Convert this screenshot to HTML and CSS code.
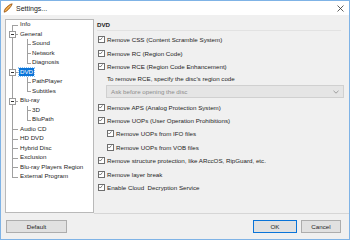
FILE: index.html
```html
<html>
<head>
	<title>Settings...</title>
	<meta http-equiv="Content-Type" content="text/html; charset=utf-8" />
	<link rel="stylesheet" href="styles.css">
</head>
<body>
	<div class="window">
		<div class="titlebar">
			<svg class="app_icon" viewBox="0 0 10 10" width="10" height="10">
				<path d="M1.2 9.2 C1 6.5 3 4.5 5.5 2.6 C6.8 1.6 8 1 9.2 0.8 C8.8 2.3 7.9 3.6 6.8 4.9 C5 7 3.4 8.6 1.2 9.2 Z" fill="#e8962e" stroke="#8a4b12" stroke-width="0.7"/>
				<path d="M2.4 7.8 C3.5 6.4 5.2 4.6 7.6 2.4" fill="none" stroke="#fbd48a" stroke-width="0.7"/>
			</svg>
			<span class="title">Settings...</span>
			<svg class="close" viewBox="0 0 7 7" width="7" height="7">
				<path d="M0.5 0.5 L6.5 6.5 M6.5 0.5 L0.5 6.5" stroke="#333" stroke-width="0.8"/>
			</svg>
		</div>

		<div class="main">
			<div class="tree">
				<ul class="tree_root">
					<li class="first"><div class="row"><span class="label">Info</span></div></li>
					<li><div class="row"><i class="toggle"></i><span class="label">General</span></div>
						<ul class="sub">
							<li><div class="row"><span class="label">Sound</span></div></li>
							<li><div class="row"><span class="label">Network</span></div></li>
							<li><div class="row"><span class="label">Diagnosis</span></div></li>
						</ul>
					</li>
					<li><div class="row"><i class="toggle"></i><span class="label selected">DVD</span></div>
						<ul class="sub">
							<li><div class="row"><span class="label">PathPlayer</span></div></li>
							<li><div class="row"><span class="label">Subtitles</span></div></li>
						</ul>
					</li>
					<li><div class="row"><i class="toggle"></i><span class="label">Blu-ray</span></div>
						<ul class="sub">
							<li><div class="row"><span class="label">3D</span></div></li>
							<li><div class="row"><span class="label">BluPath</span></div></li>
						</ul>
					</li>
					<li><div class="row"><span class="label">Audio CD</span></div></li>
					<li><div class="row"><span class="label">HD DVD</span></div></li>
					<li><div class="row"><span class="label">Hybrid Disc</span></div></li>
					<li><div class="row"><span class="label">Exclusion</span></div></li>
					<li><div class="row"><span class="label">Blu-ray Players Region</span></div></li>
					<li><div class="row"><span class="label">External Program</span></div></li>
				</ul>
			</div>

			<div class="page">
				<div class="page_head">DVD</div>
				<label class="check"><i class="box"><svg viewBox="0 0 7 7"><path d="M1.2 3.6 L2.8 5.2 L5.9 1.6"/></svg></i>Remove CSS (Content Scramble System)</label>
				<label class="check"><i class="box"><svg viewBox="0 0 7 7"><path d="M1.2 3.6 L2.8 5.2 L5.9 1.6"/></svg></i>Remove RC (Region Code)</label>
				<label class="check"><i class="box"><svg viewBox="0 0 7 7"><path d="M1.2 3.6 L2.8 5.2 L5.9 1.6"/></svg></i>Remove RCE (Region Code Enhancement)</label>
				<div class="hint">To remove RCE, specify the disc's region code</div>
				<div class="combo">
					<span>Ask before opening the disc</span>
					<svg class="chevron" viewBox="0 0 6 4" width="6" height="4"><path d="M0.5 0.8 L3 3.2 L5.5 0.8" fill="none" stroke="#8a8a8a" stroke-width="0.8"/></svg>
				</div>
				<label class="check"><i class="box"><svg viewBox="0 0 7 7"><path d="M1.2 3.6 L2.8 5.2 L5.9 1.6"/></svg></i>Remove APS (Analog Protection System)</label>
				<label class="check"><i class="box"><svg viewBox="0 0 7 7"><path d="M1.2 3.6 L2.8 5.2 L5.9 1.6"/></svg></i>Remove UOPs (User Operation Prohibitions)</label>
				<label class="check indented"><i class="box"><svg viewBox="0 0 7 7"><path d="M1.2 3.6 L2.8 5.2 L5.9 1.6"/></svg></i>Remove UOPs from IFO files</label>
				<label class="check indented"><i class="box"><svg viewBox="0 0 7 7"><path d="M1.2 3.6 L2.8 5.2 L5.9 1.6"/></svg></i>Remove UOPs from VOB files</label>
				<label class="check"><i class="box"><svg viewBox="0 0 7 7"><path d="M1.2 3.6 L2.8 5.2 L5.9 1.6"/></svg></i>Remove structure protection, like ARccOS, RipGuard, etc.</label>
				<label class="check"><i class="box"><svg viewBox="0 0 7 7"><path d="M1.2 3.6 L2.8 5.2 L5.9 1.6"/></svg></i>Remove layer break</label>
				<label class="check"><i class="box"><svg viewBox="0 0 7 7"><path d="M1.2 3.6 L2.8 5.2 L5.9 1.6"/></svg></i>Enable Cloud&nbsp; Decryption Service</label>
			</div>
		</div>

		<div class="footer">
			<button class="btn btn_default">Default</button>
			<span class="spacer"></span>
			<button class="btn btn_ok">OK</button>
			<button class="btn btn_cancel">Cancel</button>
		</div>
	</div>
</body>
</html>
```

FILE: styles.css
```css
body { margin: 0; font-family: "Liberation Sans", Arial, sans-serif; font-size: 6.2px; color: #1e1e1e; }
.window { width: 350px; height: 240px; box-sizing: border-box; border: 1px solid #7fb3e6; background-color: #f0f0f0; display: flex; flex-direction: column; }

/* title bar */
.titlebar { height: 14px; background-color: #fff; display: flex; align-items: center; padding-left: 2px; }
.app_icon { width: 10px; height: 10px; }
.title { font-size: 7px; margin-left: 3px; color: #222; flex: 1; }
.close { margin-right: 5px; }

/* body */
.main { display: flex; padding: 4px 0 0 4px; }
.tree { width: 87px; height: 192px; background-color: #fff; border: 1px solid #b9b9b9; }
.tree ul { list-style: none; margin: 0; padding: 0; }
.tree_root { padding-top: 1.5px; }
.tree li { position: relative; }
.row { position: relative; height: 9.5px; line-height: 9.5px; white-space: nowrap; }
.tree_root > li > .row { padding-left: 14px; }
.sub > li > .row { padding-left: 26px; }

/* tree lines */
.tree_root > li::before { content: ''; position: absolute; left: 6px; top: 0; bottom: 0; border-left: 1px solid #a0a0a0; }
.tree_root > li.first::before { top: 4.75px; }
.tree_root > li:last-child::before { bottom: auto; height: 4.75px; }
.tree_root > li > .row::before { content: ''; position: absolute; left: 6px; width: 6px; top: 4.5px; border-top: 1px solid #a0a0a0; }
.sub > li::before { content: ''; position: absolute; left: 21px; top: 0; bottom: 0; border-left: 1px solid #a0a0a0; }
.sub > li:last-child::before { bottom: auto; height: 4.75px; }
.sub > li > .row::before { content: ''; position: absolute; left: 21px; width: 4px; top: 4.5px; border-top: 1px solid #a0a0a0; }
.toggle { position: absolute; left: 3px; top: 1.5px; width: 5px; height: 5px; border: 1px solid #9a9a9a; background-color: #fff; z-index: 1; }
.toggle::after { content: ''; position: absolute; left: 1px; top: 2px; width: 3px; border-top: 1px solid #333; }
.label { display: inline-block; padding: 0 1px; margin-left: -1px; line-height: 8px; }
.selected { background-color: #0a74d8; color: #fff; outline: 1px dotted #8cc4f5; }

/* settings page */
.page { flex: 1; height: 194px; padding-left: 4px; border-bottom: 1px solid #d6d6d6; }
.page_head { font-weight: bold; margin: 0 8px 2.3px -1px; padding-top: 1px; line-height: 10px; height: 10px; border-bottom: 1px solid #e2e2e2; }
.check { display: flex; align-items: center; height: 13.4px; white-space: nowrap; }
.indented { padding-left: 9px; }
.box { width: 5px; height: 5px; border: 1px solid #6e6e6e; background-color: #fff; margin-right: 2px; display: flex; }
.box svg { width: 5px; height: 5px; overflow: visible; }
.box path { fill: none; stroke: #333; stroke-width: 0.9; transform: translate(-1px, -1px); }
.hint { height: 11.6px; line-height: 11.6px; padding-left: 9px; }
.combo { display: flex; align-items: center; height: 11px; margin: 0 5px 2.3px 8px; background-color: #e5e5e5; border: 1px solid #d0d0d0; color: #8d8d8d; padding: 0 4px; }
.combo span { flex: 1; }

/* footer buttons */
.footer { display: flex; padding: 6px 8px 0 5px; }
.spacer { flex: 1; }
.btn { font-family: "Liberation Sans", Arial, sans-serif; font-size: 6.2px; color: #1e1e1e; height: 13px; padding: 0; background-color: #e1e1e1; border: 1px solid #adadad; }
.btn_default { width: 61px; }
.btn_ok { width: 44px; border-color: #0a74d8; margin-right: 4px; }
.btn_cancel { width: 40px; }
```
